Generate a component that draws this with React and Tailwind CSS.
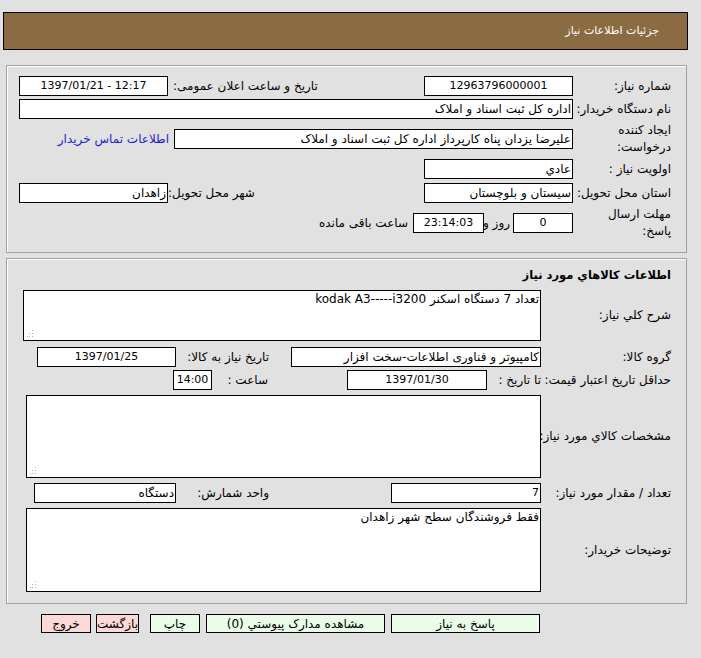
import React from "react";

const F = { fontFamily: '"DejaVu Sans", "Noto Sans", sans-serif' };

function Box({ w, children, center, ltr, small, className = "" }) {
  return (
    <div
      dir={ltr ? "ltr" : undefined}
      className={`h-[20px] shrink-0 border border-black bg-white flex items-center whitespace-nowrap overflow-hidden text-black ${small ? "text-[11px]" : "text-[12px]"} ${center ? "justify-center" : "justify-start pr-[1px]"} ${className}`}
      style={{ width: w }}
    >
      {children}
    </div>
  );
}

function Grip() {
  return (
    <svg className="absolute left-[3px] bottom-[3px]" width="7" height="7" viewBox="0 0 7 7">
      <rect x="5" y="0" width="1" height="1" fill="#b0b0b0" />
      <rect x="5" y="3" width="1" height="1" fill="#b0b0b0" />
      <rect x="5" y="6" width="1" height="1" fill="#b0b0b0" />
      <rect x="2" y="3" width="1" height="1" fill="#b0b0b0" />
      <rect x="2" y="6" width="1" height="1" fill="#b0b0b0" />
      <rect x="0" y="6" width="1" height="1" fill="#b0b0b0" />
    </svg>
  );
}

function Area({ w, h, children }) {
  return (
    <div
      className="relative shrink-0 border border-black bg-white text-[12px] text-black pr-[1px] pt-[1px] leading-[15px] whitespace-nowrap"
      style={{ width: w, height: h }}
    >
      {children}
      <Grip />
    </div>
  );
}

function Label({ w, pr = 15, children, className = "" }) {
  return (
    <div
      className={`shrink-0 text-[12px] text-black leading-[17px] whitespace-nowrap ${className}`}
      style={{ width: w, paddingRight: pr }}
    >
      {children}
    </div>
  );
}

const Row = ({ mt, children }) => (
  <div className="flex items-center h-[20px]" style={{ marginTop: mt }}>
    {children}
  </div>
);

export default function App() {
  return (
    <div dir="rtl" className="w-[701px] h-[658px] bg-[#e1e1e1] overflow-hidden" style={F}>
      {/* header */}
      <div className="pt-[12px] flex">
        <div className="mr-[13px] w-[685px] h-[38px] border border-black bg-[#8b6c42] flex items-center pr-[28px] text-[11px] text-white">
          جزئیات اطلاعات نیاز
        </div>
      </div>

      {/* panel 1 */}
      <div className="mt-[15px] mr-[14px] w-[681px] h-[188px] border border-[#a0a0a0] shadow-[inset_1px_1px_0_#ffffff]">
        <Row mt={10}>
          <Label w={113}>شماره نیاز:</Label>
          <Box w={149} center small>12963796000001</Box>
          <div className="w-[256px] flex justify-end pl-[5px] text-[12px] whitespace-nowrap">تاریخ و ساعت اعلان عمومی:</div>
          <Box w={149} center small ltr>1397/01/21 - 12:17</Box>
        </Row>
        <Row mt={3}>
          <Label w={113}>نام دستگاه خریدار:</Label>
          <Box w={554}>اداره کل ثبت اسناد و املاک</Box>
        </Row>
        <Row mt={10}>
          <Label w={113}>
            ایجاد کننده
            <br />
            درخواست:
          </Label>
          <Box w={399}>علیرضا یزدان پناه کارپرداز اداره کل ثبت اسناد و املاک</Box>
          <div className="mr-[5px] text-[12px] text-[#1c1cd0] whitespace-nowrap">اطلاعات تماس خریدار</div>
        </Row>
        <Row mt={10}>
          <Label w={113}>اولویت نیاز :</Label>
          <Box w={149}>عادي</Box>
        </Row>
        <Row mt={4}>
          <Label w={113}>استان محل تحویل:</Label>
          <Box w={149}>سیستان و بلوچستان</Box>
          <div className="w-[256px] flex justify-end text-[12px] whitespace-nowrap">شهر محل تحویل:</div>
          <Box w={149}>زاهدان</Box>
        </Row>
        <Row mt={10}>
          <Label w={113}>
            مهلت ارسال
            <br />
            پاسخ:
          </Label>
          <Box w={60} center small>0</Box>
          <div className="w-[29px] pr-[3px] text-[12px] whitespace-nowrap">روز و</div>
          <Box w={71} center small>23:14:03</Box>
          <div className="mr-[5px] text-[12px] whitespace-nowrap">ساعت باقی مانده</div>
        </Row>
      </div>

      {/* panel 2 */}
      <div className="mt-[5px] mr-[14px] w-[681px] h-[346px] border border-[#a0a0a0] shadow-[inset_1px_1px_0_#ffffff]">
        <div className="mt-[8px] pr-[15px] text-[11.5px] font-bold leading-[16px] text-black">اطلاعات كالاهاي مورد نياز</div>

        <div className="flex items-center mt-[7px]">
          <Label w={145}>شرح کلي نیاز:</Label>
          <Area w={518} h={51}>تعداد 7 دستگاه اسکنر kodak A3-----i3200</Area>
        </div>

        <Row mt={6}>
          <Label w={145}>گروه کالا:</Label>
          <Box w={250}>کامپیوتر و فناوری اطلاعات-سخت افزار</Box>
          <div className="w-[115px] pr-[22px] text-[12px] whitespace-nowrap">تاریخ نیاز به کالا:</div>
          <Box w={139} center small>1397/01/25</Box>
        </Row>

        <Row mt={3}>
          <Label w={145}>حداقل تاریخ اعتبار قیمت:</Label>
          <div className="w-[54px] shrink-0 text-[12px] whitespace-nowrap">تا تاریخ :</div>
          <Box w={140} center small>1397/01/30</Box>
          <div className="w-[135px] shrink-0 pr-[79px] text-[12px] whitespace-nowrap">ساعت :</div>
          <Box w={39} center small>14:00</Box>
        </Row>

        <div className="flex items-center mt-[5px]">
          <Label w={145}>مشخصات کالاي مورد نیاز:</Label>
          <Area w={515} h={83}></Area>
        </div>

        <Row mt={5}>
          <Label w={145}>تعداد / مقدار مورد نیاز:</Label>
          <Box w={150} small>7</Box>
          <div className="w-[215px] shrink-0 pr-[122px] text-[12px] whitespace-nowrap">واحد شمارش:</div>
          <Box w={142}>دستگاه</Box>
        </Row>

        <div className="flex items-center mt-[5px]">
          <Label w={145}>توضیحات خریدار:</Label>
          <Area w={515} h={84}>فقط فروشندگان سطح شهر زاهدان</Area>
        </div>
      </div>

      {/* buttons */}
      <div className="flex mt-[10px] text-[12px] text-black">
        <div className="mr-[161px] w-[149px] h-[19px] border border-black bg-[#e9fde9] flex items-center justify-center">پاسخ به نیاز</div>
        <div className="mr-[6px] w-[179px] h-[19px] border border-black bg-[#e9fde9] flex items-center justify-center whitespace-nowrap">مشاهده مدارک پیوستي (0)</div>
        <div className="mr-[6px] w-[50px] h-[19px] border border-black bg-[#e9fde9] flex items-center justify-center">چاپ</div>
        <div className="mr-[11px] w-[43px] h-[19px] border border-black bg-[#fdd8d8] flex items-center justify-center whitespace-nowrap">بازگشت</div>
        <div className="mr-[5px] w-[50px] h-[19px] border border-black bg-[#fdd8d8] flex items-center justify-center">خروج</div>
      </div>
    </div>
  );
}
